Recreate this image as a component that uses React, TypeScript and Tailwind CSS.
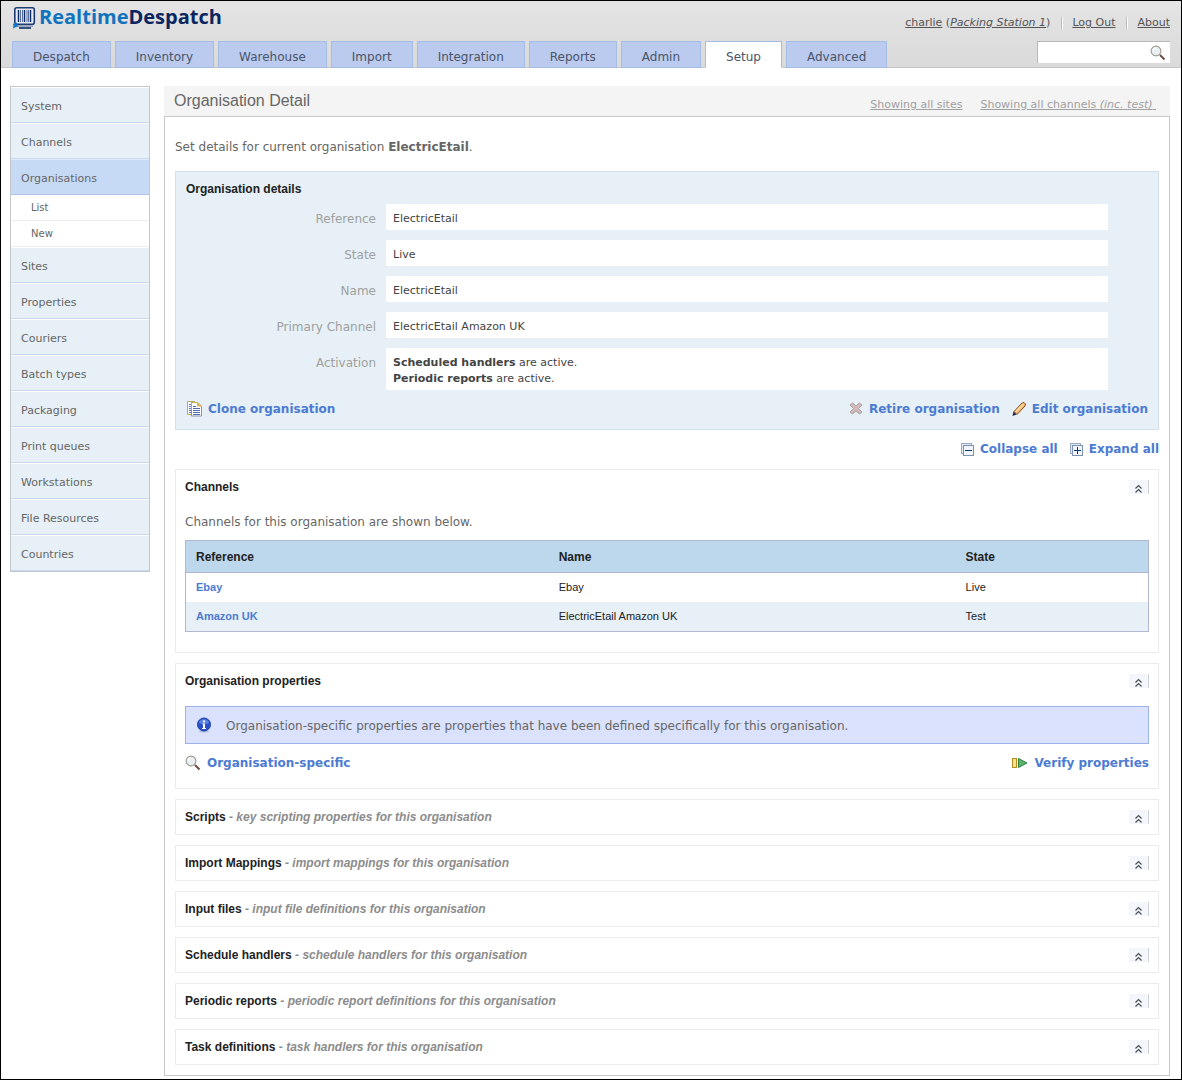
import React, { useState } from "react";

const SANS = "font-['DejaVu_Sans',Verdana,sans-serif]";
const ARIAL = "font-['Liberation_Sans',Arial,sans-serif]";

const TABS = ["Despatch", "Inventory", "Warehouse", "Import", "Integration", "Reports", "Admin", "Setup", "Advanced"];

const MENU = [
  "System",
  "Channels",
  "Organisations",
  "Sites",
  "Properties",
  "Couriers",
  "Batch types",
  "Packaging",
  "Print queues",
  "Workstations",
  "File Resources",
  "Countries",
];

const CHANNELS = [
  { reference: "Ebay", name: "Ebay", state: "Live" },
  { reference: "Amazon UK", name: "ElectricEtail Amazon UK", state: "Test" },
];

const SECTIONS = [
  { title: "Scripts", note: "key scripting properties for this organisation" },
  { title: "Import Mappings", note: "import mappings for this organisation" },
  { title: "Input files", note: "input file definitions for this organisation" },
  { title: "Schedule handlers", note: "schedule handlers for this organisation" },
  { title: "Periodic reports", note: "periodic report definitions for this organisation" },
  { title: "Task definitions", note: "task handlers for this organisation" },
];

const LogoMark = () => (
  <svg width="24" height="24" viewBox="0 0 24 24">
    <rect x="2.8" y="2.8" width="19.5" height="16.5" rx="2" fill="#e6eaf2" stroke="#1d3a72" strokeWidth="1.6" />
    <path d="M6.5 5v12M12.5 5v12M18.5 5v12" stroke="#0a2a66" strokeWidth="1.4" />
    <path d="M8.5 5v12M10.5 5v12M15 5v12M16.5 5v12" stroke="#5a6f9c" />
    <path d="M5 21h16" stroke="#5a6f9c" />
    <path d="M7 23h12" stroke="#0a2a66" strokeWidth="1.6" />
    <path d="M5 17.5l1 4-2 .5L1 23.5l.5-3L1 19z" fill="#1274c4" />
  </svg>
);

const MagnifierIcon = () => (
  <svg width="16" height="16" viewBox="0 0 16 16">
    <path d="M10 10l4.5 4.5" stroke="#6d4c41" strokeWidth="2" />
    <circle cx="6" cy="6" r="4.9" fill="#e9eff3" stroke="#9c9c8c" strokeWidth="1.1" />
    <path d="M3 5.5A3.2 3.2 0 0 1 6 3" stroke="#fff" strokeWidth="1.4" fill="none" />
  </svg>
);

const CopyIcon = () => (
  <svg width="16" height="16" viewBox="0 0 16 16">
    <path d="M1.5 .5h7v13h-7z" fill="#fff" stroke="#b9a766" />
    <path d="M3 3.5h2M3 5.5h2M3 7.5h2M3 9.5h2M3 11.5h2" stroke="#5c7cba" />
    <path d="M5.5 1.5h6l4 3.5v10h-10z" fill="#fff" stroke="#8793a8" />
    <path d="M5.5 8V1.5h6l3.5 3.5" fill="none" stroke="#c9a94e" />
    <path d="M11 1v4.5h5z" fill="#dcb659" />
    <path d="M7 5.5h3M7 7.5h7M7 9.5h7M7 11.5h7M7 13.5h7" stroke="#4c6cad" />
  </svg>
);

const CrossIcon = () => (
  <svg width="14" height="14" viewBox="0 0 14 14">
    <path
      d="M1 3L3.500 1 7 4l3.500-3L13 3 9.500 6.500 13 10l-2.500 2L7 9l-3.500 3L1 10l3.500-3.500z"
      fill="#d2b9ba"
      stroke="#aaa0a2"
    />
  </svg>
);

const PencilIcon = () => (
  <svg width="14" height="14" viewBox="0 0 14 14">
    <path d="M2 9.5L10 1l2-.5 1.5 1.5-.5 2L5 12.5z" fill="#f4b869" stroke="#8a5120" />
    <path d="M4 9.5L11.5 2" stroke="#fde3b3" strokeWidth="1.3" />
    <path d="M1.5 9.5l3 3-4 1.5z" fill="#1c2350" />
  </svg>
);

const StackIcon = ({ plus = false }: { plus?: boolean }) => (
  <svg width="13" height="13" viewBox="0 0 13 13" shapeRendering="crispEdges">
    <path d="M.5 .5h10v10h-10z" fill="#dfe8f3" stroke="#9aaac0" />
    <path d="M2.5 2.5h10v10h-10z" fill="#f0f5fa" stroke="#7d90ad" />
    <path d="M4 7.5h7" stroke="#0b3a78" />
    {plus && <path d="M7.5 4v7" stroke="#0b3a78" />}
  </svg>
);

const InfoIcon = () => (
  <svg width="16" height="16" viewBox="0 0 16 16">
    <ellipse cx="8" cy="14.5" rx="5" ry="1" fill="#b9c0dc" />
    <circle cx="8" cy="7.5" r="6.5" fill="#2a52c8" stroke="#1c3fa6" />
    <path d="M3 6a5.2 5.2 0 0 1 10 0c-3 1.5-7 1.5-10 0z" fill="#5c82e2" />
    <path d="M7 3.5h2v1.8H7zM6.5 6.5H9V11h1v1H6v-1h1V7.5h-.5z" fill="#fff" />
  </svg>
);

const VerifyIcon = () => (
  <svg width="16" height="12" viewBox="0 0 16 12">
    <rect x=".5" y="1.5" width="4" height="9" fill="#f6e08a" stroke="#b08d1e" />
    <path d="M6.5 1.5v9L15 6z" fill="#5fb36f" stroke="#2f7f45" />
  </svg>
);

const Toggle = ({ label, onClick }: { label: string; onClick: () => void }) => (
  <button
    type="button"
    aria-label={`Toggle ${label}`}
    onClick={onClick}
    className="flex h-3.5 w-5 items-end justify-center border-r border-[#cfd3d8] bg-[#f3f7fb]"
  >
    <svg width="9" height="10" viewBox="0 0 9 10">
      <path d="M1.5 4.5l3-3 3 3M1.5 8.5l3-3 3 3" fill="none" stroke="#4a4f57" strokeWidth="1.2" />
    </svg>
  </button>
);

interface ActionLinkProps {
  icon: React.ReactNode;
  children: React.ReactNode;
}

const ActionLink = ({ icon, children }: ActionLinkProps) => (
  <a href="#" className="flex h-4 items-center gap-1.5 text-xs/4 font-bold text-[#4c7bd2] hover:underline">
    {icon}
    {children}
  </a>
);

interface PanelProps {
  title: string;
  note?: string;
  children?: React.ReactNode;
}

const Panel = ({ title, note, children }: PanelProps) => {
  const [open, setOpen] = useState(true);
  return (
    <section className="border border-[#ececec] p-[9px]">
      <div className="flex h-4 items-center justify-between">
        <h3 className={`${ARIAL} text-xs/4 font-bold text-[#222]`}>
          {title}
          {note && <em className="text-[#8c8c8c]"> - {note}</em>}
        </h3>
        <Toggle label={title} onClick={() => setOpen(!open)} />
      </div>
      {open && children}
    </section>
  );
};

const Detail = ({ label, children }: { label: string; children: React.ReactNode }) => (
  <div className="flex gap-2.5">
    <dt className="w-[190px] shrink-0 pt-[7px] text-right text-xs/4 text-[#a0a0a0]">{label}</dt>
    <dd className="mr-10 flex-1 bg-white px-[7px] pt-[7px] pb-[3px] text-[11px]/4 text-[#444]">{children}</dd>
  </div>
);

const Header = () => (
  <header className="border-b border-[#c6c6c6] bg-linear-to-b from-[#e4e4e4] to-[#dadada] px-[11px]">
    <div className="flex h-10 items-start justify-between">
      <a href="#" className="flex items-center gap-[3px] pt-1">
        <LogoMark />
        <span className="font-['Open_Sans',sans-serif] text-[20px]/6 font-bold text-[#0a2560]">
          <span className="text-[#1172bd]">Realtime</span>Despatch
        </span>
      </a>
      <div className="flex items-center pt-3.5 text-[11px]/4 text-[#555]">
        <span>
          <a href="#" className="underline">charlie</a> (
          <a href="#" className="italic underline">Packing Station 1</a>)
        </span>
        <span className="mr-[9px] ml-[11px] h-3 border-r border-l border-r-white border-l-[#bbb]" />
        <a href="#" className="underline">Log Out</a>
        <span className="mr-[9px] ml-[11px] h-3 border-r border-l border-r-white border-l-[#bbb]" />
        <a href="#" className="underline">About</a>
      </div>
    </div>
    <div className="-mb-px flex items-start justify-between">
      <nav className="flex gap-1">
        {TABS.map((tab) => (
          <a
            key={tab}
            href="#"
            className={`h-[27px] border border-[#a6bde3] px-5 pt-[7px] text-xs/4 text-[#4a5468] ${
              tab === "Setup" ? "border-b-white bg-white" : "bg-[#bbcbef]"
            }`}
          >
            {tab}
          </a>
        ))}
      </nav>
      <form className="flex h-[22px] w-[133px] items-center border-t border-l border-[#b8b8b8] bg-white pr-1">
        <input type="text" aria-label="Search" className="min-w-0 flex-1 px-1 text-[11px] outline-none" />
        <button type="button" aria-label="Run search">
          <MagnifierIcon />
        </button>
      </form>
    </div>
  </header>
);

const Sidebar = () => (
  <aside className="w-[140px] shrink-0 border border-[#c3c6ca] text-[11px]/4 text-[#666]">
    {MENU.map((item) => (
      <React.Fragment key={item}>
        <a
          href="#"
          className={`block h-9 border-t border-b px-2.5 pt-[11px] ${
            item === "Organisations"
              ? "border-t-[#dfeafa] border-b-[#adc4e8] bg-[#c6daf6]"
              : "border-t-white border-b-[#c5d8ee] bg-[#e6f0f6]"
          }`}
        >
          {item}
        </a>
        {item === "Organisations" && (
          <div className="text-[10px]/4">
            <a href="#" className="block h-[26px] border-b border-[#ececec] px-5 pt-[5px]">List</a>
            <a href="#" className="block h-[26px] border-b border-[#ececec] px-5 pt-[5px]">New</a>
          </div>
        )}
      </React.Fragment>
    ))}
  </aside>
);

const ChannelsTable = () => (
  <table
    className={`${ARIAL} mt-2.5 mb-[11px] w-full table-fixed border-separate border-spacing-0 border border-[#b0b8d0] text-left text-[11px]/4 text-[#222]`}
  >
    <thead className="bg-[#bdd7ec] text-xs/4">
      <tr className="h-8">
        <th className="w-[37.7%] border-b border-[#b0b8d0] px-2.5 font-bold">Reference</th>
        <th className="w-[42.3%] border-b border-[#b0b8d0] px-2.5 font-bold">Name</th>
        <th className="w-[20%] border-b border-[#b0b8d0] px-2.5 font-bold">State</th>
      </tr>
    </thead>
    <tbody>
      {CHANNELS.map((channel) => (
        <tr key={channel.reference} className="h-[29px] even:bg-[#e6f0f6]">
          <td className="px-2.5 pb-0.5">
            <a href="#" className="font-bold text-[#4c7bd2]">{channel.reference}</a>
          </td>
          <td className="px-2.5 pb-0.5">{channel.name}</td>
          <td className="px-2.5 pb-0.5">{channel.state}</td>
        </tr>
      ))}
    </tbody>
  </table>
);

const App: React.FC = () => {
  return (
    <div className={`${SANS} border border-black bg-white pb-[3px] text-xs/4 text-[#666]`}>
      <Header />
      <div className="flex items-start gap-3.5 pt-[18px] pr-[11px] pl-[9px]">
        <Sidebar />
        <main className="min-w-0 flex-1">
          <div className="flex h-[30px] items-center justify-between bg-[#f4f4f4] px-2.5">
            <h1 className={`${ARIAL} text-base/5 text-[#666]`}>Organisation Detail</h1>
            <div className="flex gap-[18px] pt-2 pr-1 text-[11px]/4 text-[#a0a0a0]">
              <a href="#" className="underline">Showing all sites</a>
              <a href="#" className="whitespace-pre underline">
                Showing all channels <em>(inc. test)</em>{" "}
              </a>
            </div>
          </div>

          <div className="border border-[#c8c8c8] p-2.5">
            <p className="pt-3 pb-4">
              Set details for current organisation <strong>ElectricEtail</strong>.
            </p>

            <section className="border border-[#d3e0ea] bg-[#e6f0f6] px-2.5 pt-[9px] pb-3">
              <h2 className={`${ARIAL} text-xs/4 font-bold text-[#222]`}>Organisation details</h2>
              <dl className="mt-[7px] flex flex-col gap-2.5">
                <Detail label="Reference">ElectricEtail</Detail>
                <Detail label="State">Live</Detail>
                <Detail label="Name">ElectricEtail</Detail>
                <Detail label="Primary Channel">ElectricEtail Amazon UK</Detail>
                <Detail label="Activation">
                  <strong>Scheduled handlers</strong> are active.
                  <br />
                  <strong>Periodic reports</strong> are active.
                </Detail>
              </dl>
              <div className="mt-[11px] flex justify-between">
                <ActionLink icon={<CopyIcon />}>Clone organisation</ActionLink>
                <div className="flex gap-3">
                  <ActionLink icon={<CrossIcon />}>Retire organisation</ActionLink>
                  <ActionLink icon={<PencilIcon />}>Edit organisation</ActionLink>
                </div>
              </div>
            </section>

            <div className="flex justify-end gap-3 pt-[11px] pb-3">
              <ActionLink icon={<StackIcon />}>Collapse all</ActionLink>
              <ActionLink icon={<StackIcon plus />}>Expand all</ActionLink>
            </div>

            <div className="flex flex-col gap-2.5">
              <Panel title="Channels">
                <p className="mt-[19px]">Channels for this organisation are shown below.</p>
                <ChannelsTable />
              </Panel>

              <Panel title="Organisation properties">
                <div className="mt-[17px] flex min-h-[38px] items-center gap-3.5 border border-[#9db2ec] bg-[#dbe2fe] px-2.5">
                  <InfoIcon />
                  <p className="pt-0.5">
                    Organisation-specific properties are properties that have been defined specifically for this organisation.
                  </p>
                </div>
                <div className="mt-[11px] mb-2 flex justify-between">
                  <ActionLink icon={<MagnifierIcon />}>Organisation-specific</ActionLink>
                  <ActionLink icon={<VerifyIcon />}>Verify properties</ActionLink>
                </div>
              </Panel>

              {SECTIONS.map((section) => (
                <Panel key={section.title} title={section.title} note={section.note} />
              ))}
            </div>
          </div>
        </main>
      </div>
    </div>
  );
};

export default App;
